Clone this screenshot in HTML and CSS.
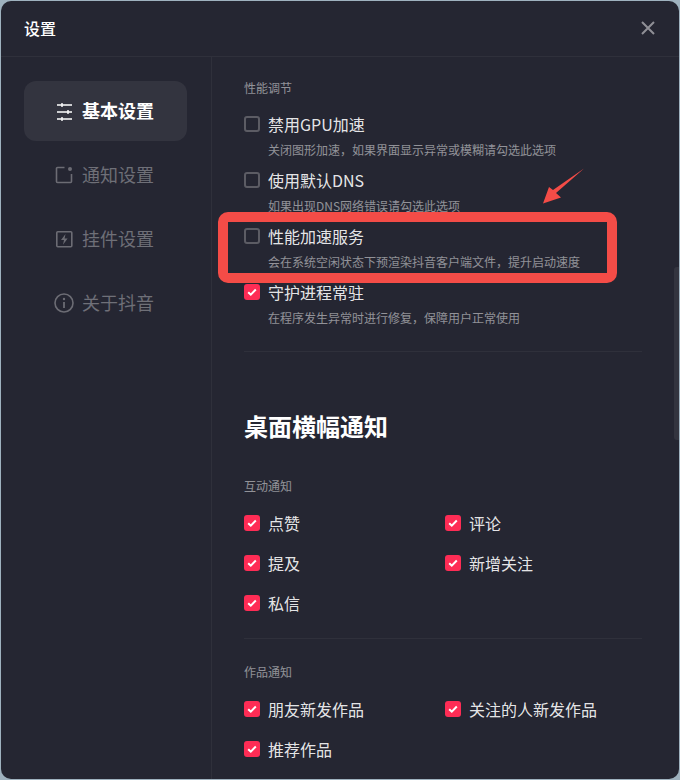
FILE: index.html
```html
<!DOCTYPE html>
<html lang="zh-CN">
<head>
<meta charset="utf-8">
<title>设置</title>
<link rel="stylesheet" href="styles.css">
</head>
<body>
<div class="window">
  <header class="header">
    <h1 class="header-title">设置</h1>
    <svg class="close" viewBox="0 0 14 14" width="14" height="14"><path d="M1 1l12 12M13 1L1 13" fill="none" stroke="#8f8f96" stroke-width="2"/></svg>
  </header>
  <div class="body">
    <nav class="sidebar">
      <a class="nav-item active">
        <svg class="nav-icon" viewBox="0 0 18 20" width="18" height="20"><path d="M2 4h15M2 11h15M2 18h15M7 2v4M13 9v4M7 16v4" fill="none" stroke="#fff" stroke-width="1.4"/></svg>
        <span class="nav-text">基本设置</span>
      </a>
      <a class="nav-item">
        <svg class="nav-icon" viewBox="0 0 18 18" width="18" height="18"><path d="M9.5 1.5H2.5a1 1 0 0 0-1 1v13a1 1 0 0 0 1 1h13a1 1 0 0 0 1-1V8" fill="none" stroke="#6c6c74" stroke-width="1.6"/><circle cx="15" cy="3" r="2" fill="#6c6c74"/></svg>
        <span class="nav-text">通知设置</span>
      </a>
      <a class="nav-item">
        <svg class="nav-icon" viewBox="0 0 18 18" width="18" height="18"><rect x="1.8" y="1.8" width="15" height="15" rx="1" fill="none" stroke="#6c6c74" stroke-width="1.6"/><path d="M10.5 4L6 10h3l-1 4.8 4.6-6.2h-3z" fill="#6c6c74"/></svg>
        <span class="nav-text">挂件设置</span>
      </a>
      <a class="nav-item">
        <svg class="nav-icon info" viewBox="0 0 20 20" width="20" height="20"><circle cx="10" cy="10" r="9" fill="none" stroke="#6c6c74" stroke-width="1.6"/><circle cx="10" cy="6" r="1.2" fill="#6c6c74"/><path d="M10 9v6" stroke="#6c6c74" stroke-width="1.8"/></svg>
        <span class="nav-text">关于抖音</span>
      </a>
    </nav>
    <main class="content">
      <h3 class="group-label">性能调节</h3>
      <div class="options">
        <label class="option"><span class="box"></span><span class="option-title">禁用GPU加速</span><span class="option-desc">关闭图形加速，如果界面显示异常或模糊请勾选此选项</span></label>
        <label class="option"><span class="box"></span><span class="option-title">使用默认DNS</span><span class="option-desc">如果出现DNS网络错误请勾选此选项</span></label>
        <label class="option"><span class="box"></span><span class="option-title">性能加速服务</span><span class="option-desc">会在系统空闲状态下预渲染抖音客户端文件，提升启动速度</span></label>
        <label class="option"><span class="box checked"><svg viewBox="0 0 16 16" width="16" height="16"><path d="M4.2 8.2l2.6 2.5 5-5.2" fill="none" stroke="#fff" stroke-width="2"/></svg></span><span class="option-title">守护进程常驻</span><span class="option-desc">在程序发生异常时进行修复，保障用户正常使用</span></label>
      </div>
      <hr class="divider first">
      <h2 class="section-title">桌面横幅通知</h2>
      <h3 class="group-label interact">互动通知</h3>
      <div class="check-grid">
        <label class="check"><span class="box checked"><svg viewBox="0 0 16 16" width="16" height="16"><path d="M4.2 8.2l2.6 2.5 5-5.2" fill="none" stroke="#fff" stroke-width="2"/></svg></span>点赞</label>
        <label class="check"><span class="box checked"><svg viewBox="0 0 16 16" width="16" height="16"><path d="M4.2 8.2l2.6 2.5 5-5.2" fill="none" stroke="#fff" stroke-width="2"/></svg></span>评论</label>
        <label class="check"><span class="box checked"><svg viewBox="0 0 16 16" width="16" height="16"><path d="M4.2 8.2l2.6 2.5 5-5.2" fill="none" stroke="#fff" stroke-width="2"/></svg></span>提及</label>
        <label class="check"><span class="box checked"><svg viewBox="0 0 16 16" width="16" height="16"><path d="M4.2 8.2l2.6 2.5 5-5.2" fill="none" stroke="#fff" stroke-width="2"/></svg></span>新增关注</label>
        <label class="check"><span class="box checked"><svg viewBox="0 0 16 16" width="16" height="16"><path d="M4.2 8.2l2.6 2.5 5-5.2" fill="none" stroke="#fff" stroke-width="2"/></svg></span>私信</label>
      </div>
      <hr class="divider second">
      <h3 class="group-label works">作品通知</h3>
      <div class="check-grid">
        <label class="check"><span class="box checked"><svg viewBox="0 0 16 16" width="16" height="16"><path d="M4.2 8.2l2.6 2.5 5-5.2" fill="none" stroke="#fff" stroke-width="2"/></svg></span>朋友新发作品</label>
        <label class="check"><span class="box checked"><svg viewBox="0 0 16 16" width="16" height="16"><path d="M4.2 8.2l2.6 2.5 5-5.2" fill="none" stroke="#fff" stroke-width="2"/></svg></span>关注的人新发作品</label>
        <label class="check"><span class="box checked"><svg viewBox="0 0 16 16" width="16" height="16"><path d="M4.2 8.2l2.6 2.5 5-5.2" fill="none" stroke="#fff" stroke-width="2"/></svg></span>推荐作品</label>
      </div>
    </main>
  </div>
  <div class="scrollbar"></div>
  <div class="highlight"></div>
  <svg class="arrow" viewBox="0 0 44 38" width="44" height="38"><path d="M42 0.5L11 22 7 19 1 35.5 19 29.5 14 25z" fill="#f44c47"/></svg>
</div>
</body>
</html>
```
FILE: styles.css
```css
* { box-sizing: border-box; }
html, body { margin: 0; padding: 0; }
body {
  width: 680px;
  height: 780px;
  overflow: hidden;
  background: #9fb2bf;
  font-family: "Noto Sans CJK SC", "Noto Sans", sans-serif;
}
.window {
  position: relative;
  width: 678px;
  height: 778px;
  margin-left: 1px;
  margin-top: 1px;
  display: flex;
  flex-direction: column;
  background: #252632;
  border-radius: 10px;
  overflow: hidden;
}
.header {
  flex: none;
  height: 56px;
  display: flex;
  align-items: center;
  justify-content: space-between;
  padding: 0 24px 2px 23px;
  border-bottom: 1px solid #2f303b;
}
.header-title {
  margin: 0;
  font-size: 16px;
  line-height: 24px;
  font-weight: 500;
  color: #fff;
}
.close { position: relative; }
.body { flex: 1; display: flex; min-height: 0; }
.sidebar {
  flex: none;
  width: 211px;
  padding: 24px 24px 0 23px;
  border-right: 1px solid #2f303b;
  display: flex;
  flex-direction: column;
  gap: 4px;
}
.nav-item {
  height: 60px;
  border-radius: 12px;
  display: flex;
  align-items: center;
  padding-left: 31px;
  font-size: 18px;
  color: rgba(255,255,255,.34);
}
.nav-item.active {
  background: #33343f;
  color: #fff;
  font-weight: 700;
}
.nav-text { padding-bottom: 2px; }
.nav-icon { flex: none; margin-right: 9px; }
.nav-icon.info { margin-left: -1px; margin-right: 8px; }
.content {
  flex: 1;
  min-width: 0;
  padding: 21px 37px 0 32px;
  overflow: hidden;
}
.group-label {
  margin: 0;
  font-size: 12px;
  line-height: 20px;
  font-weight: 400;
  color: rgba(255,255,255,.5);
}
.group-label.interact { margin-top: 34px; }
.group-label.works { margin-top: 23px; }
.options {
  margin-top: 14px;
  display: flex;
  flex-direction: column;
  gap: 8px;
}
.option {
  display: grid;
  grid-template-columns: 16px 1fr;
  column-gap: 8px;
  row-gap: 4px;
  align-items: center;
}
.option-title {
  font-size: 16px;
  line-height: 24px;
  color: rgba(255,255,255,.9);
}
.option-desc {
  grid-column: 2;
  font-size: 12px;
  line-height: 20px;
  color: rgba(255,255,255,.5);
}
.box {
  width: 16px;
  height: 16px;
  border-radius: 3px;
  border: 2px solid #5c5c64;
  display: block;
}
.box.checked {
  background: #fe2c55;
  border: 0;
}
.box svg { display: block; }
.divider {
  margin: 0;
  border: 0;
  height: 1px;
  background: #2f303b;
}
.divider.first { margin-top: 23px; }
.divider.second { margin-top: 23px; }
.section-title {
  margin: 58px 0 0;
  font-size: 24px;
  line-height: 32px;
  font-weight: 700;
  color: #fff;
}
.check-grid {
  margin-top: 15px;
  display: grid;
  grid-template-columns: 201px 1fr;
  row-gap: 16px;
}
.check {
  display: flex;
  align-items: center;
  gap: 8px;
  font-size: 16px;
  line-height: 24px;
  color: rgba(255,255,255,.9);
}
.scrollbar {
  position: absolute;
  right: 0;
  top: 266px;
  width: 5px;
  height: 173px;
  background: #33343f;
  border-radius: 3px 0 0 3px;
}
.highlight {
  position: absolute;
  left: 217px;
  top: 211px;
  width: 399px;
  height: 71px;
  border: 10px solid #f44c47;
  border-radius: 10px;
}
.arrow {
  position: absolute;
  left: 541px;
  top: 167px;
}
```
